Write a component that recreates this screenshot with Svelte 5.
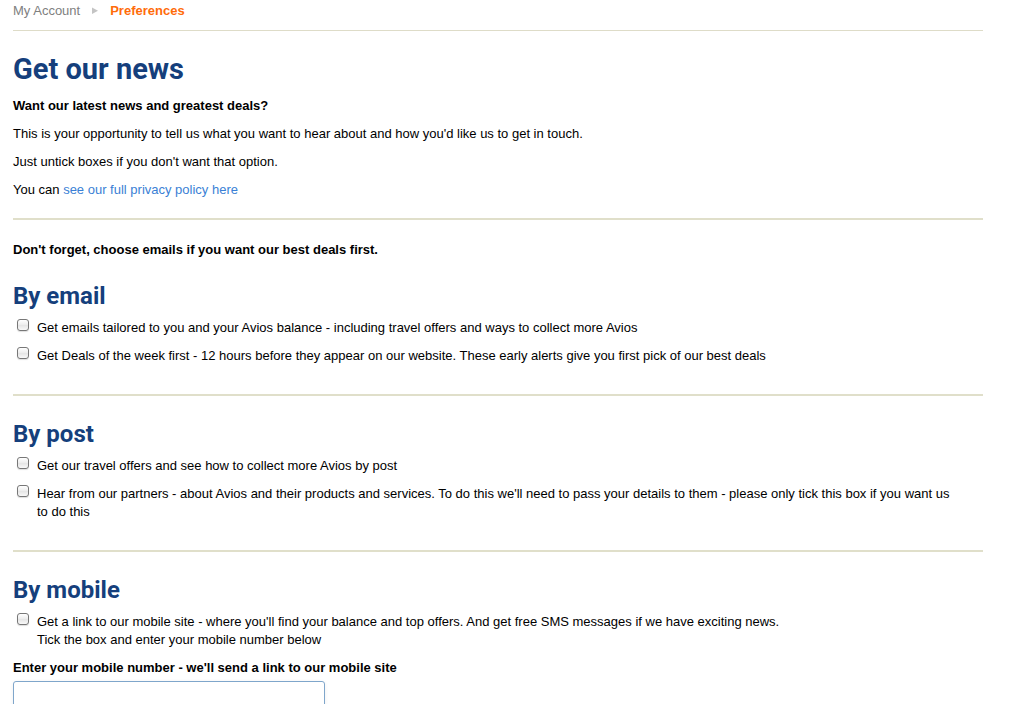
<script>
  const sections = [
    {
      title: 'By email',
      options: [
        ['Get emails tailored to you and your Avios balance - including travel offers and ways to collect more Avios'],
        ['Get Deals of the week first - 12 hours before they appear on our website. These early alerts give you first pick of our best deals']
      ]
    },
    {
      title: 'By post',
      options: [
        ['Get our travel offers and see how to collect more Avios by post'],
        ["Hear from our partners - about Avios and their products and services. To do this we'll need to pass your details to them - please only tick this box if you want us to do this"]
      ]
    },
    {
      title: 'By mobile',
      options: [
        ["Get a link to our mobile site - where you'll find your balance and top offers. And get free SMS messages if we have exciting news.", 'Tick the box and enter your mobile number below']
      ]
    }
  ];
</script>

<main>
  <nav aria-label="Breadcrumb">
    <a href="#account">My Account</a>
    <svg width="6" height="8" viewBox="0 0 6 8" aria-hidden="true"><path d="M0 0.5 L6 3.8 L0 7 Z" fill="#c4c4c4" /></svg>
    <span aria-current="page">Preferences</span>
  </nav>

  <section class="intro">
    <h1>Get our news</h1>
    <p><strong>Want our latest news and greatest deals?</strong></p>
    <p>This is your opportunity to tell us what you want to hear about and how you'd like us to get in touch.</p>
    <p>Just untick boxes if you don't want that option.</p>
    <p>You can <a href="#privacy">see our full privacy policy here</a></p>
  </section>

  <form>
    <p class="reminder"><strong>Don't forget, choose emails if you want our best deals first.</strong></p>
    {#each sections as section}
      <section class="group">
        <h2>{section.title}</h2>
        {#each section.options as lines}
          <label class="option">
            <input type="checkbox" />
            <span>{#each lines as line, i}{#if i}<br />{/if}{line}{/each}</span>
          </label>
        {/each}
        {#if section.title === 'By mobile'}
          <label class="number" for="mobile">Enter your mobile number - we'll send a link to our mobile site</label>
          <input id="mobile" class="field" type="tel" />
        {/if}
      </section>
    {/each}
  </form>
</main>

<style>
  :global(body) {
    background: #fff;
  }
  :global(html) {
    scrollbar-width: none;
  }
  main {
    padding: 0 41px 0 13px;
    color: #000;
    font: 13px/18px "Liberation Sans", Arial, sans-serif;
  }
  nav {
    display: flex;
    align-items: center;
    gap: 12px;
    padding: 2px 0 10px;
    border-bottom: 1px solid #dedcc8;
  }
  nav a {
    color: #808080;
    text-decoration: none;
  }
  nav span {
    color: #ff6c0a;
    font-weight: bold;
  }
  h1, h2 {
    margin: 0;
    color: #153f7c;
    font-family: Roboto, "Open Sans", sans-serif;
    font-weight: 700;
  }
  h1 {
    padding-bottom: 10px;
    font-size: 29px;
    line-height: 36px;
  }
  h2 {
    padding-bottom: 9px;
    font-size: 24px;
    line-height: 28px;
  }
  p {
    margin: 0 0 10px;
  }
  .intro {
    padding: 20px 0 9px;
    border-bottom: 2px solid #e0dfca;
  }
  .intro a {
    color: #3a7fd5;
    text-decoration: none;
  }
  .reminder {
    margin: 21px 0 0;
  }
  .group {
    padding: 23px 0 19px;
  }
  .group + .group {
    padding-top: 24px;
    border-top: 2px solid #e0dfca;
  }
  .option {
    display: flex;
    gap: 8px;
    margin-bottom: 10px;
    padding: 0 24px 0 4px;
  }
  .option input {
    appearance: none;
    box-sizing: border-box;
    flex: none;
    width: 12px;
    height: 12px;
    margin: 0;
    border: 1px solid #777;
    border-radius: 3px;
    background: linear-gradient(#fff, #eee 45%, #e6e6e6 55%, #f8f8f8);
    box-shadow: 0 1px 1px #0002;
  }
  .option input:checked {
    background: #2f7bd9;
  }
  .number {
    display: block;
    margin-bottom: 4px;
    font-weight: bold;
  }
  .field {
    box-sizing: border-box;
    width: 312px;
    max-width: 100%;
    height: 32px;
    padding: 4px 8px;
    border: 1px solid #7fa6cb;
    border-radius: 3px;
    box-shadow: 0 1px 4px #0001;
    font: inherit;
  }
</style>
